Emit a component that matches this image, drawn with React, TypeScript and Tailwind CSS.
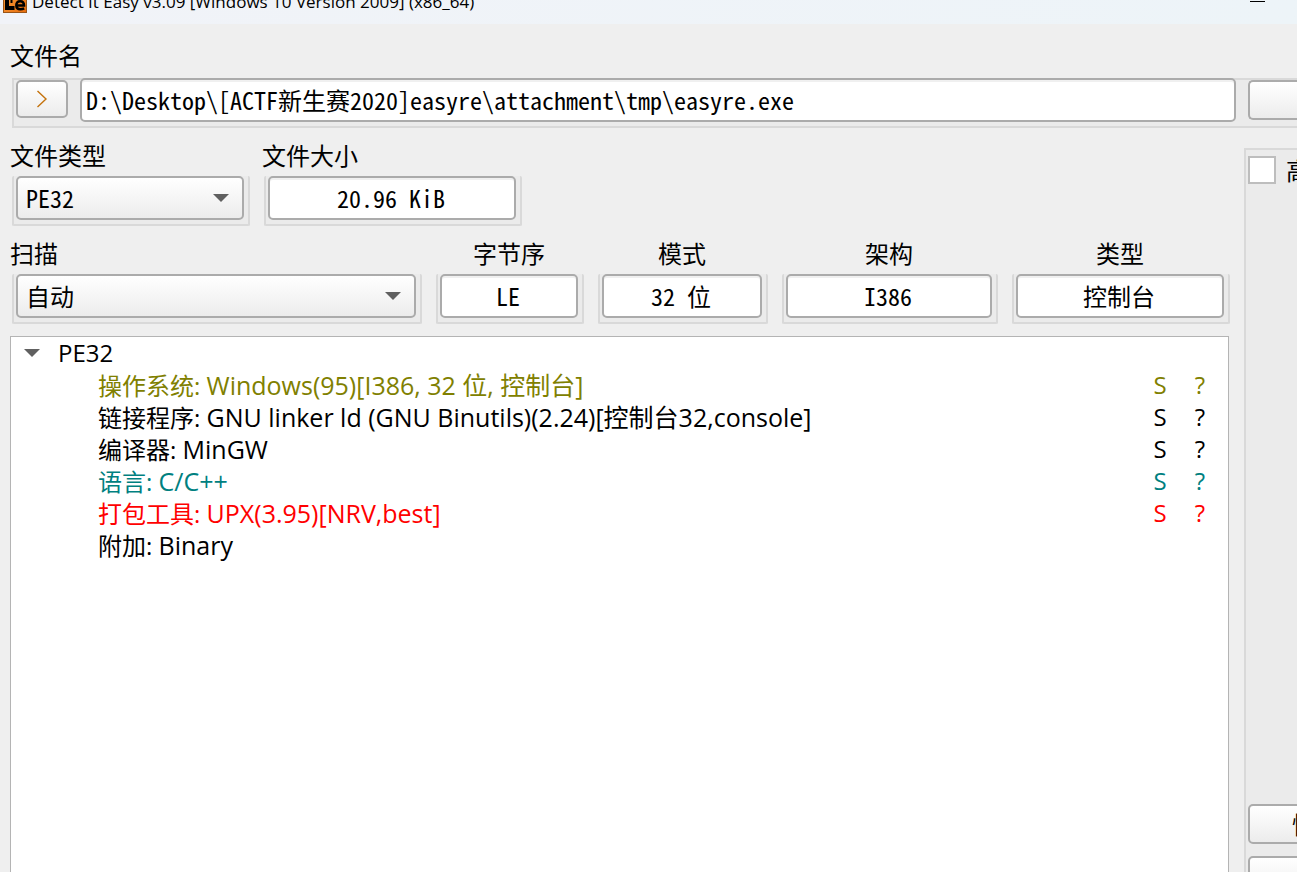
import type { ReactNode } from "react";

const song = "font-['Noto_Sans_Mono_CJK_SC','Noto_Sans_CJK_SC',monospace] font-light";
const ui = "font-['Open_Sans','Noto_Sans_CJK_SC',sans-serif]";
const box = "h-11 w-full rounded-[5px] border-2 border-[#ababab] text-2xl text-black";
const sunken = "bg-white pb-0.5 shadow-[inset_0_2px_0_#f0f0f0]";
const raised = "rounded-[5px] border-2 border-[#ababab] bg-linear-to-b from-white to-[#ececec]";

function Triangle() {
  return (
    <svg width="16" height="8" viewBox="0 0 16 8" aria-hidden="true">
      <path d="M0 0H16L8 8Z" fill="#606060" />
    </svg>
  );
}

function Frame({ children }: { children: ReactNode }) {
  return (
    <div className="rounded-[2px] border-x-2 border-b-2 border-[#d9d9d9] bg-[#ebebeb] pr-1 pb-1 pl-0.5">
      {children}
    </div>
  );
}

function Label({ id, text, centered }: { id: string; text: string; centered?: boolean }) {
  return (
    <label
      htmlFor={id}
      className={`-ml-0.5 flex h-9 items-center pb-1.5 text-2xl ${centered ? "justify-center" : ""}`}
    >
      {text}
    </label>
  );
}

function Choice({ id, label, value }: { id: string; label: string; value: string }) {
  return (
    <div>
      <Label id={id} text={label} />
      <Frame>
        <div className="relative">
          <select
            id={id}
            className={`${box} appearance-none bg-linear-to-b from-white to-[#ececec] pl-2`}
          >
            <option>{value}</option>
          </select>
          <span className="pointer-events-none absolute inset-y-0 right-[15px] flex items-center">
            <Triangle />
          </span>
        </div>
      </Frame>
    </div>
  );
}

function Field({ id, label, value, centered }: { id: string; label: string; value: string; centered?: boolean }) {
  return (
    <div>
      <Label id={id} text={label} centered={centered} />
      <Frame>
        <input id={id} readOnly value={value} className={`${box} ${sunken} block pr-0.5 text-center`} />
      </Frame>
    </div>
  );
}

const results = [
  { label: "操作系统", value: "Windows(95)[I386, 32 位, 控制台]", color: "text-[#808000]", actions: true },
  { label: "链接程序", value: "GNU linker ld (GNU Binutils)(2.24)[控制台32,console]", color: "text-black", actions: true },
  { label: "编译器", value: "MinGW", color: "text-black", actions: true },
  { label: "语言", value: "C/C++", color: "text-[#008080]", actions: true },
  { label: "打包工具", value: "UPX(3.95)[NRV,best]", color: "text-[#ff0000]", actions: true },
  { label: "附加", value: "Binary", color: "text-black", actions: false },
];

export default function App() {
  return (
    <div className={`flex h-screen flex-col overflow-hidden bg-[#efefef] text-black ${song}`}>
      <header className={`flex h-6 shrink-0 items-end justify-between overflow-hidden bg-linear-to-r from-[#f1f3f8] to-[#edf4f8] pr-8 pl-[3px] font-normal ${ui}`}>
        <div className="flex items-end gap-[5px] pb-[11px]">
          <svg width="24" height="24" viewBox="0 0 24 24" aria-hidden="true">
            <defs>
              <linearGradient id="logo" x1="0" y1="0" x2="1" y2="1">
                <stop offset="0" stopColor="#f9a040" />
                <stop offset="1" stopColor="#e86c0c" />
              </linearGradient>
            </defs>
            <rect x="0.5" y="0.5" width="23" height="23" fill="url(#logo)" stroke="#9a5518" />
            <path d="M4 2V19H11.5" fill="none" stroke="#000" strokeWidth="4" />
            <path d="M8.5 2V14" fill="none" stroke="#000" strokeWidth="2" />
            <path d="M13.5 16.5H21Q21 12.3 17.2 12.3Q13.3 12.3 13.3 16.3Q13.3 20.3 17.4 20.3Q19.5 20.3 21.2 19.4" fill="none" stroke="#000" strokeWidth="2.5" />
          </svg>
          <h1 className="pb-px text-[17px] leading-5 whitespace-nowrap">
            Detect It Easy v3.09 [Windows 10 Version 2009] (x86_64)
          </h1>
        </div>
        <button aria-label="最小化" className="flex h-6 w-[15px] items-start pt-px">
          <span className="h-px w-full bg-black" />
        </button>
      </header>

      <section className="shrink-0 pt-4 pl-3">
        <Label id="file" text="文件名" />
        <div className="mt-0.5 flex h-[50px] items-start border-2 border-r-0 border-[#d9d9d9] bg-[#ebebeb] pl-0.5">
          <button aria-label="打开文件" className={`flex h-[38px] w-[52px] shrink-0 items-center justify-center ${raised}`}>
            <svg width="12" height="18" viewBox="0 0 12 18" fill="none" stroke="#c4720c" strokeWidth="1.4" aria-hidden="true">
              <path d="M1.5 1L10 9L1.5 17" />
            </svg>
          </button>
          <input
            id="file"
            defaultValue={"D:\\Desktop\\[ACTF新生赛2020]easyre\\attachment\\tmp\\easyre.exe"}
            className={`${box} ${sunken} -mt-0.5 ml-3 min-w-0 flex-1 px-1`}
          />
          <button aria-label="浏览" className={`ml-3 h-10 w-[49px] shrink-0 rounded-r-none border-r-0 ${raised}`} />
        </div>
      </section>

      <div className="flex min-h-0 flex-1">
        <main className="flex min-w-0 flex-1 flex-col gap-3 pt-3 pr-[14px]">
          <div className="flex shrink-0 gap-[14px] pl-3">
            <div className="w-[238px]">
              <Choice id="filetype" label="文件类型" value="PE32" />
            </div>
            <div className="w-[258px]">
              <Field id="size" label="文件大小" value="20.96 KiB" />
            </div>
          </div>
          <div className="grid shrink-0 grid-cols-[410fr_148fr_170fr_216fr_218fr] gap-[14px] pl-3">
            <Choice id="scan" label="扫描" value="自动" />
            <Field id="endian" label="字节序" value="LE" centered />
            <Field id="mode" label="模式" value="32 位" centered />
            <Field id="arch" label="架构" value="I386" centered />
            <Field id="kind" label="类型" value="控制台" centered />
          </div>
          <div className={`mr-px ml-2.5 min-h-0 flex-1 overflow-hidden border border-b-0 border-[#b4b4b4] bg-white text-2xl leading-8 font-normal ${ui}`}>
            <button aria-expanded="true" className="flex h-8 items-center gap-[18px] pl-[13px]">
              <Triangle />
              <span>PE32</span>
            </button>
            <ul>
              {results.map((r) => (
                <li key={r.label} className={`flex h-8 items-center pr-5 pl-[87px] ${r.color}`}>
                  <span className="flex-1 whitespace-nowrap">
                    {r.label}: <span className="text-[25px]">{r.value}</span>
                  </span>
                  {r.actions && (
                    <span className="flex gap-6">
                      <button className="w-4">S</button>
                      <button className="w-4">?</button>
                    </span>
                  )}
                </li>
              ))}
            </ul>
          </div>
        </main>

        <aside className="mt-5 flex w-[53px] shrink-0 flex-col overflow-hidden border-t-2 border-l-2 border-[#d9d9d9] bg-[#ebebeb] pl-0.5">
          <label className="flex items-center gap-2.5 pt-1.5 text-2xl leading-7 whitespace-nowrap">
            <input type="checkbox" className="size-7 shrink-0 appearance-none border-2 border-[#bdbdbd] bg-white" />
            高级
          </label>
          <div className="mt-auto -mb-6 flex flex-col gap-3">
            <button className={`h-10 w-40 shrink-0 pl-[42px] text-left text-2xl leading-8 ${raised}`}>快捷键</button>
            <button aria-label="选项" className={`h-10 w-40 shrink-0 ${raised}`} />
          </div>
        </aside>
      </div>
    </div>
  );
}
